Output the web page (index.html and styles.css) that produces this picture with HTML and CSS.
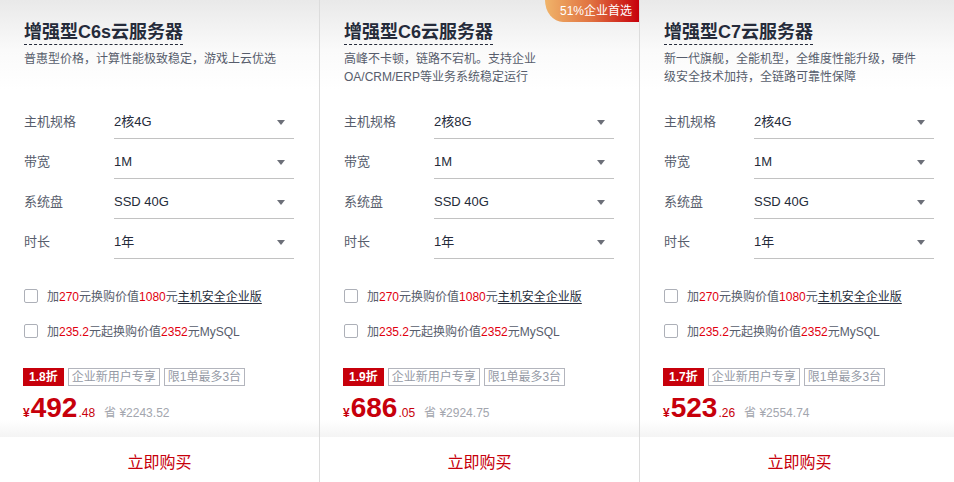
FILE: index.html
```html
<!DOCTYPE html>
<html lang="zh-CN">
<head>
<meta charset="utf-8">
<title>云服务器</title>
<link rel="stylesheet" href="styles.css">
</head>
<body>
<div class="cards">
  <div class="card">
    <div class="card-body">
      <h3 class="title"><span>增强型C6s云服务器</span></h3>
      <p class="desc">普惠型价格，计算性能极致稳定，游戏上云优选</p>
      <div class="form">
        <div class="row"><span class="label">主机规格</span><div class="select"><span>2核4G</span><i class="arrow"></i></div></div>
        <div class="row"><span class="label">带宽</span><div class="select"><span>1M</span><i class="arrow"></i></div></div>
        <div class="row"><span class="label">系统盘</span><div class="select"><span>SSD 40G</span><i class="arrow"></i></div></div>
        <div class="row"><span class="label">时长</span><div class="select"><span>1年</span><i class="arrow"></i></div></div>
      </div>
      <div class="checks">
        <label class="check"><i class="box"></i><span>加<em>270</em>元换购价值<em>1080</em>元<u>主机安全企业版</u></span></label>
        <label class="check"><i class="box"></i><span>加<em>235.2</em>元起换购价值<em>2352</em>元MySQL</span></label>
      </div>
      <div class="tags"><span class="tag red">1.8折</span><span class="tag">企业新用户专享</span><span class="tag">限1单最多3台</span></div>
      <div class="price"><span class="yen">¥</span><span class="int">492</span><span class="dec">.48</span><span class="save">省 ¥2243.52</span></div>
    </div>
    <div class="buy">立即购买</div>
  </div>
  <div class="card">
    <div class="badge">51%企业首选</div>
    <div class="card-body">
      <h3 class="title"><span>增强型C6云服务器</span></h3>
      <p class="desc">高峰不卡顿，链路不宕机。支持企业<br>OA/CRM/ERP等业务系统稳定运行</p>
      <div class="form">
        <div class="row"><span class="label">主机规格</span><div class="select"><span>2核8G</span><i class="arrow"></i></div></div>
        <div class="row"><span class="label">带宽</span><div class="select"><span>1M</span><i class="arrow"></i></div></div>
        <div class="row"><span class="label">系统盘</span><div class="select"><span>SSD 40G</span><i class="arrow"></i></div></div>
        <div class="row"><span class="label">时长</span><div class="select"><span>1年</span><i class="arrow"></i></div></div>
      </div>
      <div class="checks">
        <label class="check"><i class="box"></i><span>加<em>270</em>元换购价值<em>1080</em>元<u>主机安全企业版</u></span></label>
        <label class="check"><i class="box"></i><span>加<em>235.2</em>元起换购价值<em>2352</em>元MySQL</span></label>
      </div>
      <div class="tags"><span class="tag red">1.9折</span><span class="tag">企业新用户专享</span><span class="tag">限1单最多3台</span></div>
      <div class="price"><span class="yen">¥</span><span class="int">686</span><span class="dec">.05</span><span class="save">省 ¥2924.75</span></div>
    </div>
    <div class="buy">立即购买</div>
  </div>
  <div class="card">
    <div class="card-body">
      <h3 class="title"><span>增强型C7云服务器</span></h3>
      <p class="desc">新一代旗舰，全能机型，全维度性能升级，硬件<br>级安全技术加持，全链路可靠性保障</p>
      <div class="form">
        <div class="row"><span class="label">主机规格</span><div class="select"><span>2核4G</span><i class="arrow"></i></div></div>
        <div class="row"><span class="label">带宽</span><div class="select"><span>1M</span><i class="arrow"></i></div></div>
        <div class="row"><span class="label">系统盘</span><div class="select"><span>SSD 40G</span><i class="arrow"></i></div></div>
        <div class="row"><span class="label">时长</span><div class="select"><span>1年</span><i class="arrow"></i></div></div>
      </div>
      <div class="checks">
        <label class="check"><i class="box"></i><span>加<em>270</em>元换购价值<em>1080</em>元<u>主机安全企业版</u></span></label>
        <label class="check"><i class="box"></i><span>加<em>235.2</em>元起换购价值<em>2352</em>元MySQL</span></label>
      </div>
      <div class="tags"><span class="tag red">1.7折</span><span class="tag">企业新用户专享</span><span class="tag">限1单最多3台</span></div>
      <div class="price"><span class="yen">¥</span><span class="int">523</span><span class="dec">.26</span><span class="save">省 ¥2554.74</span></div>
    </div>
    <div class="buy">立即购买</div>
  </div>
</div>
</body>
</html>
```
FILE: styles.css
```css
html, body {
  margin: 0;
  padding: 0;
  overflow: hidden;
  background: #fff;
}
body {
  font-family: "Liberation Sans", "Noto Sans CJK SC", sans-serif;
  color: #252b3a;
}
.cards {
  display: flex;
  width: 960px;
}
.card {
  position: relative;
  width: 320px;
  flex: none;
  box-sizing: border-box;
  border-right: 1px solid #dcdcdc;
  display: flex;
  flex-direction: column;
}
.card-body {
  padding: 20px 24px 0 24px;
  height: 437px;
  box-sizing: border-box;
  background: linear-gradient(to bottom, #e9e9e9 0, #fafafa 50px, #fff 90px, #fff 420px, #f4f4f4 437px);
}
.badge {
  position: absolute;
  top: 0;
  right: 0;
  height: 22px;
  line-height: 22px;
  padding: 0 7px 0 15px;
  font-size: 12px;
  color: #fff;
  background: linear-gradient(to right, #f0b46a, #e0703f 50%, #c7000b);
  border-bottom-left-radius: 18px 22px;
}
.title {
  margin: 0;
  font-size: 18px;
  line-height: 24px;
  font-weight: bold;
}
.title span {
  display: inline-block;
  border-bottom: 1px dashed #252b3a;
  line-height: 24px;
}
.desc {
  margin: 5px 0 0;
  height: 36px;
  font-size: 12px;
  line-height: 18px;
  color: #575d6c;
}
.form {
  margin-top: 13px;
}
.row {
  display: flex;
  height: 40px;
  font-size: 13px;
}
.label {
  width: 90px;
  padding-top: 14px;
  line-height: 18px;
  color: #575d6c;
}
.select {
  width: 180px;
  box-sizing: border-box;
  padding: 14px 9px 0 0;
  line-height: 18px;
  border-bottom: 1px solid #c2c2c2;
  display: flex;
  justify-content: space-between;
  color: #252b3a;
}
.arrow {
  width: 0;
  height: 0;
  margin-top: 7px;
  border-left: 4px solid transparent;
  border-right: 4px solid transparent;
  border-top: 5px solid #6c6f78;
}
.checks {
  margin-top: 19px;
}
.check {
  display: flex;
  align-items: center;
  height: 35px;
  font-size: 12px;
  color: #575d6c;
}
.box {
  width: 14px;
  height: 14px;
  box-sizing: border-box;
  border: 1px solid #adb0b8;
  border-radius: 2px;
  margin-right: 9px;
  background: #fff;
}
.check em {
  font-style: normal;
  color: #e1000f;
}
.check u {
  color: #252b3a;
  text-decoration: underline;
  text-underline-offset: 2px;
}
.tags {
  margin-top: 20px;
  display: flex;
  gap: 4px;
  margin-left: -1px;
}
.tag {
  height: 18px;
  line-height: 16px;
  box-sizing: border-box;
  padding: 0 3px;
  border: 1px solid #b3b5bd;
  font-size: 12px;
  color: #959aa5;
}
.red {
  background: #c7000b;
  border-color: #c7000b;
  color: #fff;
  font-weight: bold;
  padding: 0 5px;
}
.price {
  margin-top: 6px;
  display: flex;
  align-items: baseline;
  color: #c7000b;
  margin-left: -1px;
}
.yen {
  font-size: 12px;
  font-weight: bold;
}
.int {
  font-size: 28px;
  font-weight: bold;
  line-height: 32px;
  margin-left: 1px;
}
.dec {
  font-size: 12px;
  margin-left: 1px;
}
.save {
  margin-left: 9px;
  font-size: 12px;
  color: #a3a6ae;
}
.buy {
  height: 52px;
  line-height: 52px;
  text-align: center;
  font-size: 16px;
  color: #c7000b;
  background: #fff;
}
```
